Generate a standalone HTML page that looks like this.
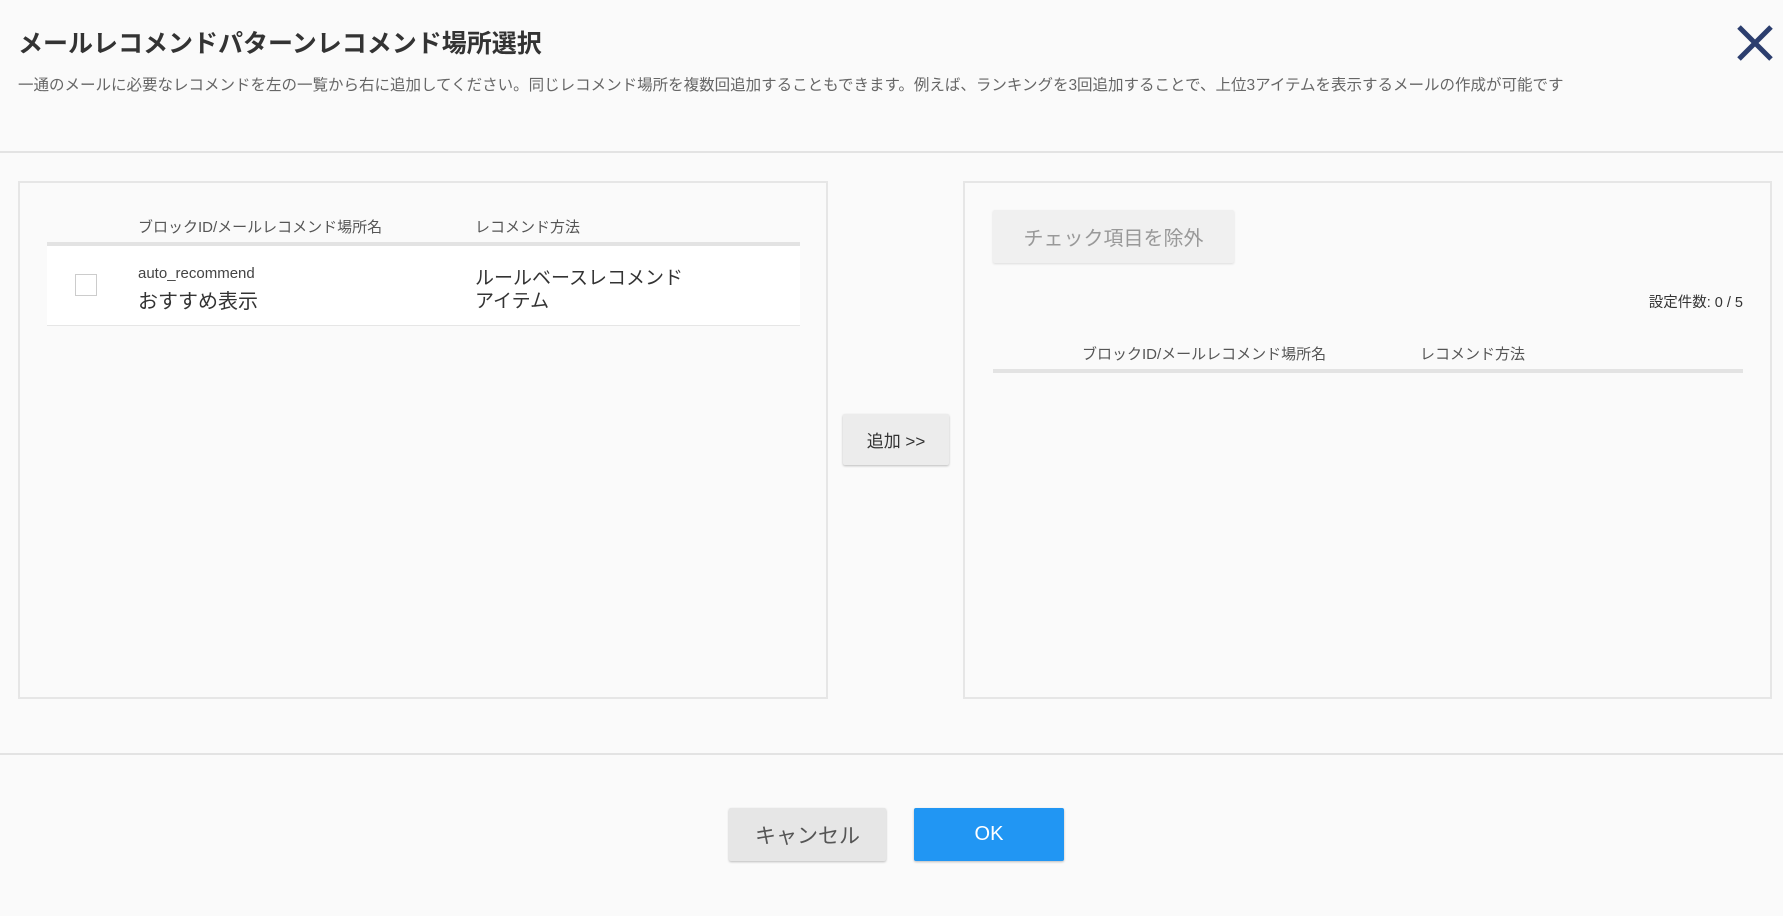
<!DOCTYPE html>
<html><head><meta charset="utf-8"><style>
*{box-sizing:border-box;margin:0;padding:0}
body{width:1783px;height:916px;background:#fafafa;font-family:"Liberation Sans","Noto Sans CJK JP",sans-serif;color:#333;position:relative;overflow:hidden}
.a{position:absolute;white-space:nowrap}
.panel{position:absolute;border:2px solid #e6e6e6;background:#fafafa}
.btn{position:absolute;display:flex;align-items:center;justify-content:center;box-shadow:0 1px 2px rgba(0,0,0,.25);border-radius:2px}
</style></head><body>
<div class="a" style="left:18px;top:24px;font-size:25px;font-weight:bold;color:#333">メールレコメンドパターンレコメンド場所選択</div>
<div class="a" style="left:18px;top:73px;font-size:15.5px;color:#666">一通のメールに必要なレコメンドを左の一覧から右に追加してください。同じレコメンド場所を複数回追加することもできます。例えば、ランキングを3回追加することで、上位3アイテムを表示するメールの作成が可能です</div>
<svg class="a" style="left:1736px;top:25px" width="38" height="36" viewBox="0 0 38 36"><path d="M3 2L35 34M35 2L3 34" stroke="#2c3e6e" stroke-width="5"/></svg>
<div class="a" style="left:0;top:151px;width:1783px;height:2px;background:#e3e3e3"></div>

<div class="panel" style="left:18px;top:181px;width:810px;height:518px"></div>
<div class="a" style="left:138px;top:216px;font-size:15px;color:#555">ブロックID/メールレコメンド場所名</div>
<div class="a" style="left:475px;top:216px;font-size:15px;color:#555">レコメンド方法</div>
<div class="a" style="left:47px;top:242px;width:753px;height:4px;background:#e3e3e3"></div>
<div class="a" style="left:47px;top:246px;width:753px;height:80px;background:#fff;border-bottom:1px solid #e6e6e6"></div>
<div class="a" style="left:75px;top:274px;width:22px;height:22px;border:1.5px solid #ccc;background:#fff"></div>
<div class="a" style="left:138px;top:265px;font-size:15px;color:#444">auto_recommend</div>
<div class="a" style="left:138px;top:285px;font-size:20px;color:#333">おすすめ表示</div>
<div class="a" style="left:475px;top:263px;font-size:19px;color:#333">ルールベースレコメンド</div>
<div class="a" style="left:475px;top:286px;font-size:19px;color:#333">アイテム</div>

<div class="btn" style="left:843px;top:414px;width:106px;height:51px;background:#ececec;font-size:17px;color:#333">追加 &gt;&gt;</div>

<div class="panel" style="left:963px;top:181px;width:809px;height:518px"></div>
<div class="btn" style="left:993px;top:210px;width:241px;height:53px;background:#f0f0f0;font-size:20px;color:#999;box-shadow:0 1px 2px rgba(0,0,0,.12)">チェック項目を除外</div>
<div class="a" style="right:40px;top:291px;font-size:14.5px;color:#333">設定件数: 0 / 5</div>
<div class="a" style="left:1082px;top:343px;font-size:15px;color:#555">ブロックID/メールレコメンド場所名</div>
<div class="a" style="left:1420px;top:343px;font-size:15px;color:#555">レコメンド方法</div>
<div class="a" style="left:993px;top:369px;width:750px;height:4px;background:#e3e3e3"></div>

<div class="a" style="left:0;top:753px;width:1783px;height:2px;background:#e3e3e3"></div>
<div class="btn" style="left:729px;top:808px;width:157px;height:53px;background:#e6e6e6;font-size:21px;color:#555">キャンセル</div>
<div class="btn" style="left:914px;top:808px;width:150px;height:53px;background:#2196f3;font-size:20px;color:#fff">OK</div>
</body></html>
